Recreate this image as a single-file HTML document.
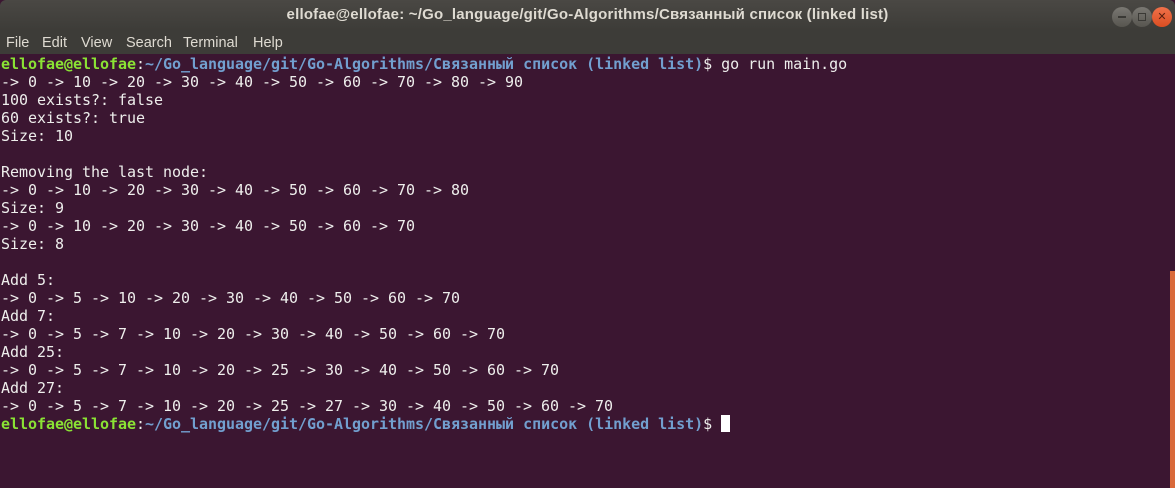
<!DOCTYPE html>
<html><head><meta charset="utf-8"><style>
body{margin:0;width:1175px;height:488px;overflow:hidden;background:#3b1631;position:relative;font-family:"Liberation Sans","DejaVu Sans",sans-serif}
.title{position:absolute;left:0;top:0;width:1175px;height:30px;background:linear-gradient(#4a4844,#3d3c38);border-radius:6px 6px 0 0;color:#dfdbd2;font-size:15px;font-weight:bold;text-align:center;line-height:30px;letter-spacing:0.2px}
.menu{position:absolute;left:0;top:30px;width:1175px;height:24px;background:#3d3c38;color:#dfdbd2;font-size:14.5px;line-height:26px}
.menu span{position:absolute}
.btn{position:absolute;top:7px;width:20px;height:20px;border-radius:50%;background:linear-gradient(#7a7873,#57554f);}
pre{position:absolute;left:1px;top:55px;margin:0;font-family:"DejaVu Sans Mono","Liberation Mono",monospace;font-size:15px;line-height:18px;color:#eeeeec;letter-spacing:-0.03px}
.g{color:#8ae234;font-weight:bold}.b{color:#729fcf;font-weight:bold}
.cur{display:inline-block;width:9px;height:17px;background:#fff;vertical-align:-3px}
.sb{position:absolute;left:1170px;top:271px;width:5px;height:217px;background:#d9693a}
</style></head><body>
<div class="title">ellofae@ellofae: ~/Go_language/git/Go-Algorithms/Связанный список (linked list)</div>
<div class="btn" style="left:1112px"><div style="position:absolute;left:6px;top:9px;width:8px;height:2px;background:#3a3935"></div></div>
<div class="btn" style="left:1132px"><div style="position:absolute;left:6px;top:6px;width:6px;height:6px;border:1px solid #3a3935"></div></div>
<div class="btn" style="left:1152px;background:linear-gradient(#f0714a,#dc4e22)"><div style="position:absolute;left:0;top:0;width:20px;line-height:20px;text-align:center;font-size:11px;color:#5a2010">✕</div></div>
<div class="menu"><span style="left:6px">File</span><span style="left:42px">Edit</span><span style="left:81px">View</span><span style="left:126px">Search</span><span style="left:183px">Terminal</span><span style="left:253px">Help</span></div>
<pre><span class="g">ellofae@ellofae</span>:<span class="b">~/Go_language/git/Go-Algorithms/Связанный список (linked list)</span>$ go run main.go
-&gt; 0 -&gt; 10 -&gt; 20 -&gt; 30 -&gt; 40 -&gt; 50 -&gt; 60 -&gt; 70 -&gt; 80 -&gt; 90
100 exists?: false
60 exists?: true
Size: 10

Removing the last node:
-&gt; 0 -&gt; 10 -&gt; 20 -&gt; 30 -&gt; 40 -&gt; 50 -&gt; 60 -&gt; 70 -&gt; 80
Size: 9
-&gt; 0 -&gt; 10 -&gt; 20 -&gt; 30 -&gt; 40 -&gt; 50 -&gt; 60 -&gt; 70
Size: 8

Add 5:
-&gt; 0 -&gt; 5 -&gt; 10 -&gt; 20 -&gt; 30 -&gt; 40 -&gt; 50 -&gt; 60 -&gt; 70
Add 7:
-&gt; 0 -&gt; 5 -&gt; 7 -&gt; 10 -&gt; 20 -&gt; 30 -&gt; 40 -&gt; 50 -&gt; 60 -&gt; 70
Add 25:
-&gt; 0 -&gt; 5 -&gt; 7 -&gt; 10 -&gt; 20 -&gt; 25 -&gt; 30 -&gt; 40 -&gt; 50 -&gt; 60 -&gt; 70
Add 27:
-&gt; 0 -&gt; 5 -&gt; 7 -&gt; 10 -&gt; 20 -&gt; 25 -&gt; 27 -&gt; 30 -&gt; 40 -&gt; 50 -&gt; 60 -&gt; 70
<span class="g">ellofae@ellofae</span>:<span class="b">~/Go_language/git/Go-Algorithms/Связанный список (linked list)</span>$ <span class="cur"></span></pre>
<div class="sb"></div>
</body></html>
